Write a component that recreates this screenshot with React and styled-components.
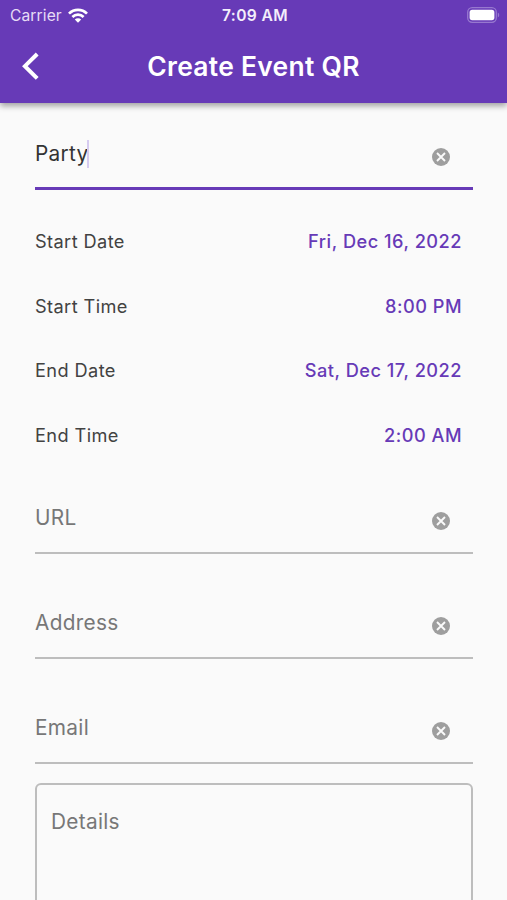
import React from "react";
import styled, { createGlobalStyle } from "styled-components";

const GlobalStyle = createGlobalStyle`
    * {
        box-sizing: border-box;
    }

    body {
        margin: 0;
        background: #fafafa;
        font-family: Inter, "Liberation Sans", sans-serif;
        overflow: hidden;
    }
`;

const Screen = styled.div`
    height: 900px;
    overflow: hidden;
    display: flex;
    flex-direction: column;
    background: #fafafa;
`;

const Header = styled.header`
    flex: none;
    height: 103px;
    background: #673ab7;
    color: #fff;
    box-shadow: 0 3px 6px rgba(0, 0, 0, 0.36);
`;

const StatusBar = styled.div`
    height: 30px;
    padding: 0 7px 0 10px;
    display: grid;
    grid-template-columns: 1fr auto 1fr;
    align-items: center;
    font-size: 15.6px;
    line-height: 30px;
`;

const Carrier = styled.div`
    display: flex;
    align-items: center;
    gap: 6px;
    color: #e6dcf5;
    letter-spacing: 0.1px;
    padding-top: 1px;

    svg {
        margin-top: -2px;
    }
`;

const Clock = styled.div`
    font-weight: 600;
    color: #f3eefb;
    letter-spacing: 0.4px;
    padding-top: 1px;
`;

const Battery = styled.div`
    display: flex;
    justify-content: flex-end;
    margin-top: -2px;
`;

const NavBar = styled.div`
    height: 71px;
    padding: 0 20px;
    display: grid;
    grid-template-columns: 40px 1fr 40px;
    align-items: center;
`;

const BackButton = styled.button`
    width: 40px;
    height: 40px;
    padding: 0;
    border: 0;
    background: none;
    display: flex;
    align-items: center;
`;

const Title = styled.h1`
    margin: 0;
    text-align: center;
    font-size: 26.4px;
    font-weight: 600;
    line-height: 32px;
    letter-spacing: 0.3px;
`;

const Form = styled.main`
    padding: 1px 34px 0 35px;
    display: flex;
    flex-direction: column;
`;

const FieldRow = styled.div`
    flex: none;
    height: 86px;
    margin-bottom: 19.1px;
    display: flex;
    align-items: flex-end;
    justify-content: space-between;
    padding-right: 23px;
    padding-bottom: ${(p) => (p.$focused ? 19 : 20)}px;
    border-bottom: ${(p) =>
        p.$focused ? "3px solid #673ab7" : "2px solid #bdbdbd"};
`;

const FieldText = styled.div`
    display: flex;
    align-items: center;
    font-size: 20.8px;
    line-height: 28px;
    letter-spacing: 0.3px;
    color: ${(p) => (p.$filled ? "#333" : "#777")};
`;

const Caret = styled.span`
    width: 2px;
    height: 28px;
    margin-left: -1.5px;
    background: #d6cbf0;
`;

const ClearButton = styled.button`
    padding: 0;
    border: 0;
    background: none;
    display: flex;
    margin-bottom: 2.5px;
`;

const Schedule = styled.div`
    display: flex;
    flex-direction: column;
    padding-right: 11px;
    margin: -0.7px 0 0.7px;
`;

const ScheduleRow = styled.div`
    height: 64.75px;
    display: flex;
    align-items: center;
    justify-content: space-between;
    font-size: 18.2px;
    letter-spacing: 0.4px;
    color: #424242;
`;

const ScheduleValue = styled.span`
    font-weight: 500;
    color: #673ab7;
    letter-spacing: 0.5px;
`;

const DetailsBox = styled.div`
    height: 180px;
    padding: 23px 14px;
    border: 2px solid #bdbdbd;
    border-radius: 6px;
`;

const scheduleItems = [
    { label: "Start Date", value: "Fri, Dec 16, 2022" },
    { label: "Start Time", value: "8:00 PM" },
    { label: "End Date", value: "Sat, Dec 17, 2022" },
    { label: "End Time", value: "2:00 AM" },
];

function WifiIcon() {
    return (
        <svg width='20' height='15' viewBox='0 0 20 15'>
            <g fill='none' stroke='#fff' strokeWidth='2.7'>
                <path d='M1 5.6a12.7 12.7 0 0 1 18 0' />
                <path d='M4.4 9a7.9 7.9 0 0 1 11.2 0' />
            </g>
            <path
                d='M10 14.8l-3.2-3.2a4.5 4.5 0 0 1 6.4 0z'
                fill='#fff'
            />
        </svg>
    );
}

function BatteryIcon() {
    return (
        <svg width='33' height='16' viewBox='0 0 33 16'>
            <rect
                x='0.7'
                y='0.7'
                width='28.6'
                height='14.6'
                rx='4.5'
                fill='none'
                stroke='#9778cf'
                strokeWidth='1.3'
            />
            <rect x='2.6' y='2.8' width='24.8' height='10.4' rx='2.6' fill='#fff' />
            <path d='M30.8 5.6a2.7 2.7 0 0 1 0 4.8z' fill='#9778cf' />
        </svg>
    );
}

function BackIcon() {
    return (
        <svg width='20' height='28' viewBox='0 0 20 28'>
            <path
                d='M17.2 2L4.9 14.2l12.3 12.2'
                fill='none'
                stroke='#fff'
                strokeWidth='4'
            />
        </svg>
    );
}

function ClearIcon() {
    return (
        <svg width='18' height='18' viewBox='0 0 18 18'>
            <circle cx='9' cy='9' r='9' fill='#9e9e9e' />
            <path
                d='M5 5l8 8M13 5l-8 8'
                stroke='#fafafa'
                strokeWidth='1.9'
            />
        </svg>
    );
}

function Field({ label, value, focused }) {
    return (
        <FieldRow $focused={focused}>
            <FieldText $filled={!!value}>
                {value || label}
                {focused && <Caret />}
            </FieldText>
            <ClearButton type='button' aria-label={`Clear ${label}`}>
                <ClearIcon />
            </ClearButton>
        </FieldRow>
    );
}

function App() {
    return (
        <Screen>
            <GlobalStyle />
            <Header>
                <StatusBar>
                    <Carrier>
                        Carrier
                        <WifiIcon />
                    </Carrier>
                    <Clock>7:09 AM</Clock>
                    <Battery>
                        <BatteryIcon />
                    </Battery>
                </StatusBar>
                <NavBar>
                    <BackButton type='button' aria-label='Back'>
                        <BackIcon />
                    </BackButton>
                    <Title>Create Event QR</Title>
                </NavBar>
            </Header>
            <Form>
                <Field label='Title' value='Party' focused />
                <Schedule>
                    {scheduleItems.map((item) => (
                        <ScheduleRow key={item.label}>
                            {item.label}
                            <ScheduleValue>{item.value}</ScheduleValue>
                        </ScheduleRow>
                    ))}
                </Schedule>
                <Field label='URL' />
                <Field label='Address' />
                <Field label='Email' />
                <DetailsBox>
                    <FieldText>Details</FieldText>
                </DetailsBox>
            </Form>
        </Screen>
    );
}

export default App;
